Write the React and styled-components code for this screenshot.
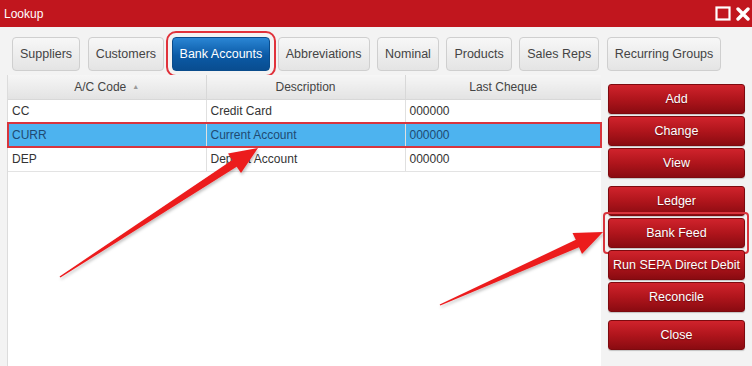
import styled, { createGlobalStyle } from 'styled-components';

const GlobalStyle = createGlobalStyle`
  html, body {
    margin: 0;
    padding: 0;
    background: #f3f3f3;
  }
  * {
    box-sizing: border-box;
  }
`;

const Window = styled.div`
  position: relative;
  width: 752px;
  height: 366px;
  display: flex;
  flex-direction: column;
  overflow: hidden;
  background: #f3f3f3;
  font-family: 'Liberation Sans', Arial, sans-serif;
  font-size: 12px;
  color: #333;
`;

const TitleBar = styled.div`
  height: 27px;
  flex-shrink: 0;
  display: flex;
  align-items: center;
  justify-content: space-between;
  padding: 0 2px 0 4px;
  background: #c1161e;
  color: #fff;
`;

const Title = styled.span`
  font-size: 12px;
`;

const WindowIcons = styled.div`
  display: flex;
  align-items: center;
  gap: 5px;
`;

const TabBar = styled.div`
  display: flex;
  gap: 7.5px;
  padding: 10px 0 4px 12px;
  flex-shrink: 0;
`;

const Tab = styled.div`
  height: 34px;
  padding: 0 7px;
  display: flex;
  align-items: center;
  border-radius: 4px;
  border: 1px solid ${(p) => (p.active ? '#0a4c8c' : '#cfcfcf')};
  background: ${(p) =>
    p.active
      ? 'linear-gradient(#2a86d4, #0b5aa6 55%, #094d90)'
      : 'linear-gradient(#f7f7f7, #e4e4e4)'};
  color: ${(p) => (p.active ? '#fff' : '#444')};
  font-size: 12.5px;
  white-space: nowrap;
  outline: ${(p) => (p.active ? '2px solid #e0323b' : 'none')};
  outline-offset: 4px;
`;

const Content = styled.div`
  flex: 1;
  display: flex;
  min-height: 0;
`;

const GridArea = styled.div`
  width: 594px;
  margin-left: 7px;
  background: #fff;
  border-left: 1px solid #dcdcdc;
`;

const Table = styled.table`
  width: 100%;
  border-collapse: collapse;
  table-layout: fixed;
`;

const HeadCell = styled.th`
  height: 24px;
  font-weight: normal;
  color: #444;
  text-align: center;
  background: linear-gradient(#f6f6f6, #e3e3e3);
  border-right: 1px solid #d8d8d8;
  border-bottom: 1px solid #d8d8d8;
  padding: 0;
  &:last-child {
    border-right: none;
  }
`;

const SortMark = styled.span`
  font-size: 7px;
  color: #999;
  margin-left: 6px;
  vertical-align: 2px;
`;

const Row = styled.tr`
  background: ${(p) => (p.selected ? '#4db3ef' : '#fff')};
  color: ${(p) => (p.selected ? '#1f4a72' : '#333')};
  outline: ${(p) => (p.selected ? '2px solid #d8353d' : 'none')};
  outline-offset: -1px;
`;

const Cell = styled.td`
  height: 24px;
  padding: 0 0 0 4px;
  border-right: 1px solid #e0e0e0;
  border-bottom: 1px solid #e3e3e3;
  white-space: nowrap;
  &:last-child {
    border-right: none;
  }
`;

const Side = styled.div`
  flex: 1;
  display: flex;
  flex-direction: column;
  gap: 8px;
  padding: 9px 7px 0 7px;
`;

const ButtonGroup = styled.div`
  display: flex;
  flex-direction: column;
  gap: 2px;
`;

const ActionButton = styled.div`
  position: relative;
  height: 30px;
  display: flex;
  align-items: center;
  justify-content: center;
  border-radius: 3px;
  border: 1px solid #7d0a0f;
  background: linear-gradient(#d0232c, #b0151c 50%, #8a0b11);
  color: #fff;
  font-size: 12.5px;
  text-shadow: 0 1px 1px rgba(0, 0, 0, 0.35);
  white-space: nowrap;
  box-shadow: 0 1px 1px rgba(0, 0, 0, 0.2);
`;

const Highlight = styled.span`
  position: absolute;
  left: -6px;
  right: -5px;
  top: -7px;
  bottom: -7px;
  border: 2px solid #d8353d;
  border-radius: 4px;
  pointer-events: none;
`;

const Annotations = styled.svg`
  position: absolute;
  top: 0;
  left: 0;
  pointer-events: none;
`;

const tabs = [
  'Suppliers',
  'Customers',
  'Bank Accounts',
  'Abbreviations',
  'Nominal',
  'Products',
  'Sales Reps',
  'Recurring Groups',
];

const rows = [
  { code: 'CC', desc: 'Credit Card', cheque: '000000' },
  { code: 'CURR', desc: 'Current Account', cheque: '000000', selected: true },
  { code: 'DEP', desc: 'Deposit Account', cheque: '000000' },
];

const groups = [
  ['Add', 'Change', 'View'],
  ['Ledger', 'Bank Feed', 'Run SEPA Direct Debit', 'Reconcile'],
  ['Close'],
];

export default function App() {
  return (
    <>
      <GlobalStyle />
      <Window>
        <TitleBar>
          <Title>Lookup</Title>
          <WindowIcons>
            <svg width="16" height="15" viewBox="0 0 16 15">
              <rect x="1.5" y="1.5" width="13" height="12" fill="none" stroke="#fff" strokeWidth="2.2" />
            </svg>
            <svg width="14" height="14" viewBox="0 0 14 14">
              <path d="M2 2 L12 12 M12 2 L2 12" stroke="#fff" strokeWidth="3.4" strokeLinecap="round" />
            </svg>
          </WindowIcons>
        </TitleBar>

        <TabBar>
          {tabs.map((t) => (
            <Tab key={t} active={t === 'Bank Accounts'}>
              {t}
            </Tab>
          ))}
        </TabBar>

        <Content>
          <GridArea>
            <Table>
              <colgroup>
                <col style={{ width: 198 }} />
                <col style={{ width: 199 }} />
                <col />
              </colgroup>
              <thead>
                <tr>
                  <HeadCell>
                    A/C Code<SortMark>▲</SortMark>
                  </HeadCell>
                  <HeadCell>Description</HeadCell>
                  <HeadCell>Last Cheque</HeadCell>
                </tr>
              </thead>
              <tbody>
                {rows.map((r) => (
                  <Row key={r.code} selected={r.selected}>
                    <Cell>{r.code}</Cell>
                    <Cell>{r.desc}</Cell>
                    <Cell>{r.cheque}</Cell>
                  </Row>
                ))}
              </tbody>
            </Table>
          </GridArea>

          <Side>
            {groups.map((g, i) => (
              <ButtonGroup key={i}>
                {g.map((b) => (
                  <ActionButton key={b}>
                    {b}
                    {b === 'Bank Feed' && <Highlight />}
                  </ActionButton>
                ))}
              </ButtonGroup>
            ))}
          </Side>
        </Content>

        <Annotations width="752" height="366" viewBox="0 0 752 366">
          <defs>
            <filter id="arrowShadow" x="-10%" y="-10%" width="120%" height="130%">
              <feDropShadow dx="1" dy="2" stdDeviation="1.5" floodColor="#000" floodOpacity="0.25" />
            </filter>
          </defs>
          <polygon
            points="60.4,277.6 236.7,166.7 241,173 258,148 228,153.5 232.3,159.9 59.6,276.4"
            fill="#ec1b1f"
            filter="url(#arrowShadow)"
          />
          <polygon
            points="440.3,305.6 579,247.2 582,254 603,232 572.5,233 575.8,239.8 439.7,304.4"
            fill="#ec1b1f"
            filter="url(#arrowShadow)"
          />
        </Annotations>
      </Window>
    </>
  );
}
